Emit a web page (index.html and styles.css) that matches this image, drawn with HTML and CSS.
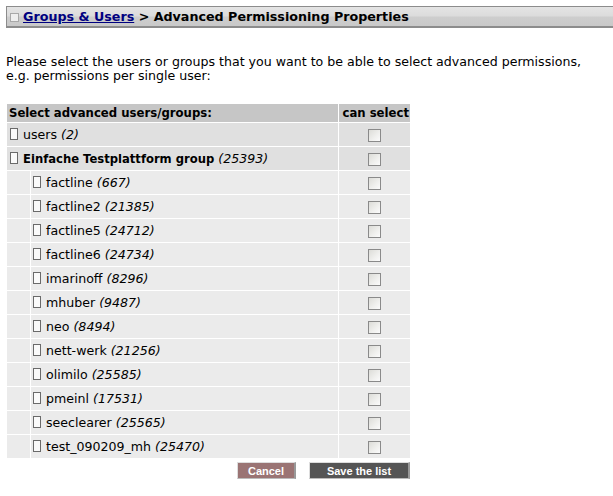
FILE: index.html
```html
<!DOCTYPE html>
<html>
<head>
<meta charset="utf-8">
<link rel="stylesheet" href="styles.css">
</head>
<body>
<div class="titlebar"><span class="ticon"></span><a href="#" class="crumb">Groups &amp; Users</a> &gt; Advanced Permissioning Properties</div>
<p class="intro">Please select the users or groups that you want to be able to select advanced permissions,<br>e.g. permissions per single user:</p>
<table class="perm">
  <tr class="head"><th colspan="2" class="hname">Select advanced users/groups:</th><th class="hsel">can select</th></tr>
  <tr class="top"><td colspan="2" class="name"><span class="node"></span>users <i>(2)</i></td><td class="sel"><span class="cb"></span></td></tr>
  <tr class="top"><td colspan="2" class="name"><span class="node"></span><b>Einfache Testplattform group</b> <i>(25393)</i></td><td class="sel"><span class="cb"></span></td></tr>
  <tr class="sub"><td class="ind"></td><td class="name"><span class="node"></span>factline <i>(667)</i></td><td class="sel"><span class="cb"></span></td></tr>
  <tr class="sub"><td class="ind"></td><td class="name"><span class="node"></span>factline2 <i>(21385)</i></td><td class="sel"><span class="cb"></span></td></tr>
  <tr class="sub"><td class="ind"></td><td class="name"><span class="node"></span>factline5 <i>(24712)</i></td><td class="sel"><span class="cb"></span></td></tr>
  <tr class="sub"><td class="ind"></td><td class="name"><span class="node"></span>factline6 <i>(24734)</i></td><td class="sel"><span class="cb"></span></td></tr>
  <tr class="sub"><td class="ind"></td><td class="name"><span class="node"></span>imarinoff <i>(8296)</i></td><td class="sel"><span class="cb"></span></td></tr>
  <tr class="sub"><td class="ind"></td><td class="name"><span class="node"></span>mhuber <i>(9487)</i></td><td class="sel"><span class="cb"></span></td></tr>
  <tr class="sub"><td class="ind"></td><td class="name"><span class="node"></span>neo <i>(8494)</i></td><td class="sel"><span class="cb"></span></td></tr>
  <tr class="sub"><td class="ind"></td><td class="name"><span class="node"></span>nett-werk <i>(21256)</i></td><td class="sel"><span class="cb"></span></td></tr>
  <tr class="sub"><td class="ind"></td><td class="name"><span class="node"></span>olimilo <i>(25585)</i></td><td class="sel"><span class="cb"></span></td></tr>
  <tr class="sub"><td class="ind"></td><td class="name"><span class="node"></span>pmeinl <i>(17531)</i></td><td class="sel"><span class="cb"></span></td></tr>
  <tr class="sub"><td class="ind"></td><td class="name"><span class="node"></span>seeclearer <i>(25565)</i></td><td class="sel"><span class="cb"></span></td></tr>
  <tr class="sub"><td class="ind"></td><td class="name"><span class="node"></span>test_090209_mh <i>(25470)</i></td><td class="sel"><span class="cb"></span></td></tr>
</table>
<div class="actions"><span class="btn cancel">Cancel</span><span class="btn save">Save the list</span></div>
</body>
</html>
```
FILE: styles.css
```css
body {
  margin: 0;
  font-family: "DejaVu Sans", Verdana, sans-serif;
  font-size: 12.6px;
  color: #000;
  background: #fff;
}
.titlebar {
  margin: 6px 0 0 6px;
  height: 22px;
  box-sizing: border-box;
  border-top: 1px solid #8c8c8c;
  border-left: 1px solid #8c8c8c;
  border-bottom: 2px solid #8c8c8c;
  background: linear-gradient(#e4e4e4 0%, #dcdcdc 45%, #cdcdcd 55%, #c9c9c9 100%);
  font-weight: bold;
  font-size: 12.7px;
  line-height: 19px;
  padding-left: 3px;
  white-space: nowrap;
}
.ticon {
  display: inline-block;
  width: 7px;
  height: 7px;
  border: 1px solid #a8a8a8;
  background: #eee;
  margin-right: 4px;
  vertical-align: -1px;
}
.crumb { color: #000080; }
.intro {
  margin: 27px 0 0 6px;
  line-height: 14px;
}
.perm {
  margin: 20px 0 0 6px;
  border-collapse: separate;
  border-spacing: 1px;
  width: 405px;
}
.perm th {
  background: #c6c6c6;
  height: 18px;
  padding: 0 1px 0 2px;
  font-size: 11.7px;
  line-height: 18px;
  white-space: nowrap;
}
.hname { text-align: left; }
.hsel { text-align: right; width: 68px; }
.perm td { height: 23px; padding: 0; }
.top td { background: #e0e0e0; }
.sub td { background: #ebebeb; }
.ind { width: 23px; }
.name { padding-left: 3px !important; white-space: nowrap; }
.sub .name { padding-left: 2px !important; }
.name b { font-size: 11.6px; }
.sel { text-align: center; }
.node {
  display: inline-block;
  width: 6px;
  height: 10px;
  border: 1px solid #6a6a6a;
  background: #fafafa;
  margin-right: 5px;
  vertical-align: -1px;
}
.cb {
  display: inline-block;
  width: 11px;
  height: 11px;
  border: 1px solid #8a8a8a;
  background: linear-gradient(135deg, #dcdcd8 0%, #f0f0ee 60%, #fbfbfb 100%);
  vertical-align: middle;
}
.actions {
  width: 403px;
  margin: 3px 0 0 7px;
  display: flex;
  justify-content: flex-end;
  gap: 13px;
}
.btn {
  font-family: "Liberation Sans", Arial, sans-serif;
  font-weight: bold;
  font-size: 11px;
  color: #fff;
  height: 17px;
  line-height: 16px;
  box-sizing: border-box;
  border-top: 1px solid #ddd;
  border-left: 1px solid #ddd;
  border-right: 2px solid #999;
  border-bottom: 1px solid #bbb;
  text-align: center;
}
.cancel { background: #9a7474; width: 59px; }
.save { background: #555; width: 101px; }
```
